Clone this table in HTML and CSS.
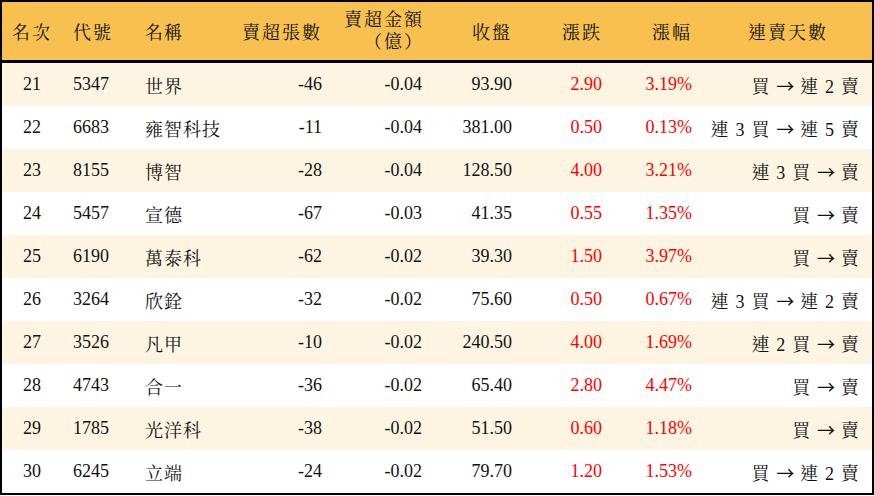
FILE: index.html
```html
<!DOCTYPE html>
<html lang="zh-Hant">
<head>
<meta charset="utf-8">
<link rel="stylesheet" href="styles.css">
</head>
<body>
<div class="frame">
<table class="grid">
<colgroup>
<col class="w1"><col class="w2"><col class="w3"><col class="w4"><col class="w5"><col class="w6"><col class="w7"><col class="w8"><col class="w9">
</colgroup>
<thead>
<tr>
<th class="c1">名次</th><th class="c2">代號</th><th class="c3">名稱</th><th class="num">賣超張數</th><th class="num two">賣超金額<br>（億）</th><th class="num">收盤</th><th class="num">漲跌</th><th class="num">漲幅</th><th class="c9h">連賣天數</th>
</tr>
</thead>
<tbody>
<tr class="odd"><td class="c1">21</td><td class="c2">5347</td><td class="c3">世界</td><td class="num">-46</td><td class="num">-0.04</td><td class="num">93.90</td><td class="num red">2.90</td><td class="num red">3.19%</td><td class="num c9">買 <span class="arr">→</span> 連 2 賣</td></tr>
<tr><td class="c1">22</td><td class="c2">6683</td><td class="c3">雍智科技</td><td class="num">-11</td><td class="num">-0.04</td><td class="num">381.00</td><td class="num red">0.50</td><td class="num red">0.13%</td><td class="num c9">連 3 買 <span class="arr">→</span> 連 5 賣</td></tr>
<tr class="odd"><td class="c1">23</td><td class="c2">8155</td><td class="c3">博智</td><td class="num">-28</td><td class="num">-0.04</td><td class="num">128.50</td><td class="num red">4.00</td><td class="num red">3.21%</td><td class="num c9">連 3 買 <span class="arr">→</span> 賣</td></tr>
<tr><td class="c1">24</td><td class="c2">5457</td><td class="c3">宣德</td><td class="num">-67</td><td class="num">-0.03</td><td class="num">41.35</td><td class="num red">0.55</td><td class="num red">1.35%</td><td class="num c9">買 <span class="arr">→</span> 賣</td></tr>
<tr class="odd"><td class="c1">25</td><td class="c2">6190</td><td class="c3">萬泰科</td><td class="num">-62</td><td class="num">-0.02</td><td class="num">39.30</td><td class="num red">1.50</td><td class="num red">3.97%</td><td class="num c9">買 <span class="arr">→</span> 賣</td></tr>
<tr><td class="c1">26</td><td class="c2">3264</td><td class="c3">欣銓</td><td class="num">-32</td><td class="num">-0.02</td><td class="num">75.60</td><td class="num red">0.50</td><td class="num red">0.67%</td><td class="num c9">連 3 買 <span class="arr">→</span> 連 2 賣</td></tr>
<tr class="odd"><td class="c1">27</td><td class="c2">3526</td><td class="c3">凡甲</td><td class="num">-10</td><td class="num">-0.02</td><td class="num">240.50</td><td class="num red">4.00</td><td class="num red">1.69%</td><td class="num c9">連 2 買 <span class="arr">→</span> 賣</td></tr>
<tr><td class="c1">28</td><td class="c2">4743</td><td class="c3">合一</td><td class="num">-36</td><td class="num">-0.02</td><td class="num">65.40</td><td class="num red">2.80</td><td class="num red">4.47%</td><td class="num c9">買 <span class="arr">→</span> 賣</td></tr>
<tr class="odd"><td class="c1">29</td><td class="c2">1785</td><td class="c3">光洋科</td><td class="num">-38</td><td class="num">-0.02</td><td class="num">51.50</td><td class="num red">0.60</td><td class="num red">1.18%</td><td class="num c9">買 <span class="arr">→</span> 賣</td></tr>
<tr><td class="c1">30</td><td class="c2">6245</td><td class="c3">立端</td><td class="num">-24</td><td class="num">-0.02</td><td class="num">79.70</td><td class="num red">1.20</td><td class="num red">1.53%</td><td class="num c9">買 <span class="arr">→</span> 連 2 賣</td></tr>
</tbody>
</table>
</div>
</body>
</html>
```

FILE: styles.css
```css
html, body {
  margin: 0;
  padding: 0;
  background: #ffffff;
}

body {
  font-family: "Liberation Serif", "Noto Serif CJK TC", "Noto Sans CJK TC", serif;
  font-size: 18px;
  color: #111111;
}

.frame {
  width: 870px;
  border: 2px solid #000000;
}

.grid {
  width: 870px;
  border-collapse: separate;
  border-spacing: 0;
  table-layout: fixed;
}

.w1 { width: 60px; }
.w2 { width: 73px; }
.w3 { width: 95px; }
.w4 { width: 100px; }
.w5 { width: 100px; }
.w6 { width: 90px; }
.w7 { width: 90px; }
.w8 { width: 90px; }
.w9 { width: 172px; }

th {
  background: #f8c14f;
  height: 58px;
  padding: 0;
  font-weight: normal;
  border-bottom: 3px solid #000000;
  letter-spacing: 2px;
  white-space: nowrap;
  vertical-align: middle;
}

th.two {
  line-height: 22px;
  padding-right: 6px;
}

td {
  height: 43px;
  padding: 0;
  white-space: nowrap;
  vertical-align: middle;
}

tbody tr.odd td {
  background: #fdf5e2;
}

.c1 {
  text-align: center;
}

.c2 {
  text-align: left;
  padding-left: 11px;
}

.c3 {
  text-align: left;
  padding-left: 10px;
  letter-spacing: 1px;
}

.num {
  text-align: right;
  padding-right: 8px;
}

.c9 {
  padding-right: 12px;
  letter-spacing: 1.2px;
}

.arr {
  font-family: "Noto Sans CJK TC", sans-serif;
  letter-spacing: 0;
}

.c9h {
  text-align: right;
  padding-right: 44px;
}

.red {
  color: #ff0000;
}
```
